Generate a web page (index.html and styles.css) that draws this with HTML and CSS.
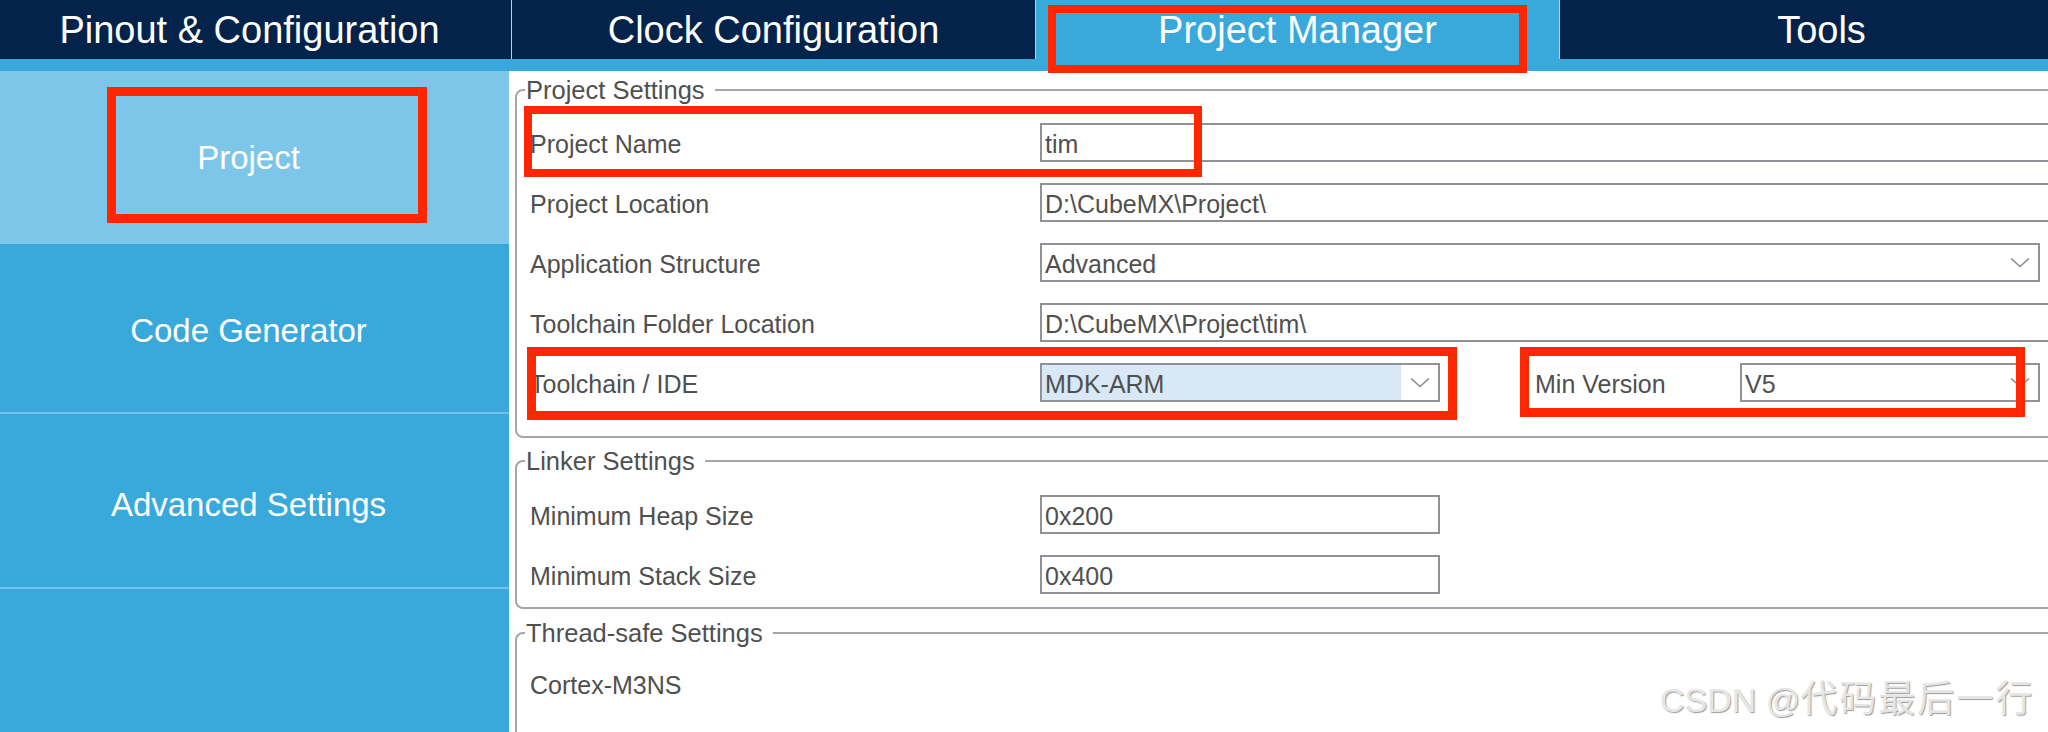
FILE: index.html
```html
<!DOCTYPE html>
<html lang="en">
<head>
<meta charset="utf-8">
<title>Project Manager</title>
<link rel="stylesheet" href="styles.css">
</head>
<body>
<div class="app">
  <nav class="tabs">
    <div class="tab">Pinout &amp; Configuration</div>
    <div class="tab">Clock Configuration</div>
    <div class="tab active">Project Manager</div>
    <div class="tab">Tools</div>
  </nav>
  <div class="strip"></div>
  <div class="main">
    <aside class="sidebar">
      <div class="side-item selected">Project</div>
      <div class="side-item item-code">Code Generator</div>
      <div class="side-item item-adv">Advanced Settings</div>
      <div class="side-fill"></div>
    </aside>
    <section class="content">
      <fieldset class="group group-project">
        <legend>Project Settings</legend>
        <div class="row"><span class="label">Project Name</span><span class="field text">tim</span></div>
        <div class="row"><span class="label">Project Location</span><span class="field text">D:\CubeMX\Project\</span></div>
        <div class="row"><span class="label">Application Structure</span><span class="field combo"><span class="val">Advanced</span><svg class="chev" width="20" height="11" viewBox="0 0 20 11"><polyline points="1,1.5 10,9.5 19,1.5" fill="none" stroke="#8c8c8c" stroke-width="1.6"/></svg></span></div>
        <div class="row"><span class="label">Toolchain Folder Location</span><span class="field text">D:\CubeMX\Project\tim\</span></div>
        <div class="row">
          <span class="label">Toolchain / IDE</span>
          <span class="field combo combo-ide"><span class="val sel">MDK-ARM</span><span class="btn"><svg class="chev" width="20" height="11" viewBox="0 0 20 11"><polyline points="1,1.5 10,9.5 19,1.5" fill="none" stroke="#8c8c8c" stroke-width="1.6"/></svg></span></span>
          <span class="sublabel">Min Version</span>
          <span class="field combo combo-ver"><span class="val">V5</span><svg class="chev" width="20" height="11" viewBox="0 0 20 11"><polyline points="1,1.5 10,9.5 19,1.5" fill="none" stroke="#8c8c8c" stroke-width="1.6"/></svg></span>
        </div>
      </fieldset>
      <fieldset class="group group-linker">
        <legend>Linker Settings</legend>
        <div class="row"><span class="label">Minimum Heap Size</span><span class="field short">0x200</span></div>
        <div class="row"><span class="label">Minimum Stack Size</span><span class="field short">0x400</span></div>
      </fieldset>
      <fieldset class="group group-thread">
        <legend>Thread-safe Settings</legend>
        <div class="row"><span class="label">Cortex-M3NS</span></div>
      </fieldset>
    </section>
  </div>
  <div class="mark mark-tab"></div>
  <div class="mark mark-side"></div>
  <div class="mark mark-name"></div>
  <div class="mark mark-ide"></div>
  <div class="mark mark-ver"></div>
  <div class="watermark">CSDN @<span class="cjk">代码最后一行</span></div>
</div>
</body>
</html>
```

FILE: styles.css
```css
* { box-sizing: border-box; }
html, body { margin: 0; padding: 0; }
body {
  width: 2048px;
  height: 732px;
  overflow: hidden;
  background: #ffffff;
  font-family: "Liberation Sans", Arial, sans-serif;
}
.app {
  position: relative;
  width: 2048px;
  height: 732px;
  overflow: hidden;
}

/* top tabs */
.tabs {
  display: flex;
  height: 59px;
  margin-left: -12px;
  background: #03234b;
}
.tab {
  flex: none;
  width: 524px;
  height: 59px;
  line-height: 61px;
  overflow: hidden;
  text-align: center;
  color: #ffffff;
  font-size: 38px;
  border-right: 1px solid #c3ccd6;
  white-space: nowrap;
}
.tab.active { background: #39a9dc; }
.strip { height: 12px; background: #39a9dc; }

/* layout */
.main {
  display: flex;
  height: 661px;
}
.sidebar {
  flex: none;
  width: 521px;
  margin-left: -12px;
  display: flex;
  flex-direction: column;
  background: #39a9dc;
}
.side-item {
  flex: none;
  height: 173px;
  display: flex;
  align-items: center;
  justify-content: center;
  color: #ffffff;
  font-size: 33px;
}
.side-item.selected { background: #7dc6e9; }
.item-code {
  height: 170px;
  padding-top: 6px;
  border-bottom: 2px solid #71c2ea;
}
.item-adv {
  height: 175px;
  padding-top: 9px;
  border-bottom: 2px solid #71c2ea;
}
.side-fill { flex: 1; }

.content {
  flex: 1;
  min-width: 0;
  padding-left: 6px;
  overflow: hidden;
}

/* groups */
.group {
  width: 1700px;
  margin: 0;
  border: 2px solid #a3a7ab;
  border-radius: 8px;
  padding: 0 0 0 13px;
}
.group legend {
  margin-left: -5px;
  padding: 0 10px 0 1px;
  font-size: 25.5px;
  line-height: 30px;
  color: #505050;
}
.group-project { margin-top: 4px; padding-top: 18px; padding-bottom: 34px; }
.group-linker { margin-top: 8px; padding-top: 19px; padding-bottom: 13px; }
.group-thread { margin-top: 9px; padding-top: 16px; padding-bottom: 200px; }

.row {
  display: flex;
  align-items: center;
  height: 39px;
  margin-bottom: 21px;
}
.row:last-child { margin-bottom: 0; }
.label {
  flex: none;
  width: 510px;
  padding-top: 3px;
  font-size: 25px;
  color: #4f4f4f;
  white-space: nowrap;
}
.sublabel {
  flex: none;
  width: 205px;
  margin-left: 95px;
  padding-top: 3px;
  font-size: 25px;
  color: #4f4f4f;
  white-space: nowrap;
}
.field {
  flex: none;
  display: flex;
  align-items: center;
  height: 39px;
  border: 2px solid #8f9397;
  padding: 3px 0 0 3px;
  font-size: 25px;
  color: #505050;
  white-space: nowrap;
  background: #ffffff;
}
.field.text { width: 1060px; }
.field.short { width: 400px; }
.field.combo {
  width: 1000px;
  justify-content: space-between;
  padding-right: 8px;
}
.chev { display: block; margin-top: -3px; }
.field.combo-ide {
  width: 400px;
  padding: 0;
  background: #d9e8f6;
}
.combo-ide .sel {
  flex: 1;
  height: 100%;
  display: flex;
  align-items: center;
  padding: 3px 0 0 3px;
}
.combo-ide .btn {
  flex: none;
  width: 37px;
  height: 100%;
  background: #ffffff;
  display: flex;
  align-items: center;
  justify-content: center;
}
.combo-ide .btn .chev { margin-top: 0; }
.field.combo-ver { width: 300px; }

/* annotation boxes drawn over the screenshot */
.mark {
  position: absolute;
  border: 9px solid #ff2600;
}
.mark-tab { left: 1048px; top: 5px; width: 479px; height: 68px; border-width: 8px; }
.mark-side { left: 107px; top: 87px; width: 320px; height: 136px; }
.mark-name { left: 524px; top: 106px; width: 678px; height: 71px; border-width: 8px; }
.mark-ide { left: 527px; top: 347px; width: 930px; height: 73px; }
.mark-ver { left: 1520px; top: 347px; width: 505px; height: 70px; }

/* watermark */
.watermark {
  position: absolute;
  left: 1660px;
  top: 676px;
  line-height: 40px;
  font-size: 34px;
  color: #e6e6e6;
  text-shadow: 1px 1px 1px #9c9c9c;
  white-space: nowrap;
}
.watermark .cjk {
  font-family: "Noto Sans CJK SC", "Liberation Sans", sans-serif;
  font-size: 37px;
  letter-spacing: 2px;
}
```
